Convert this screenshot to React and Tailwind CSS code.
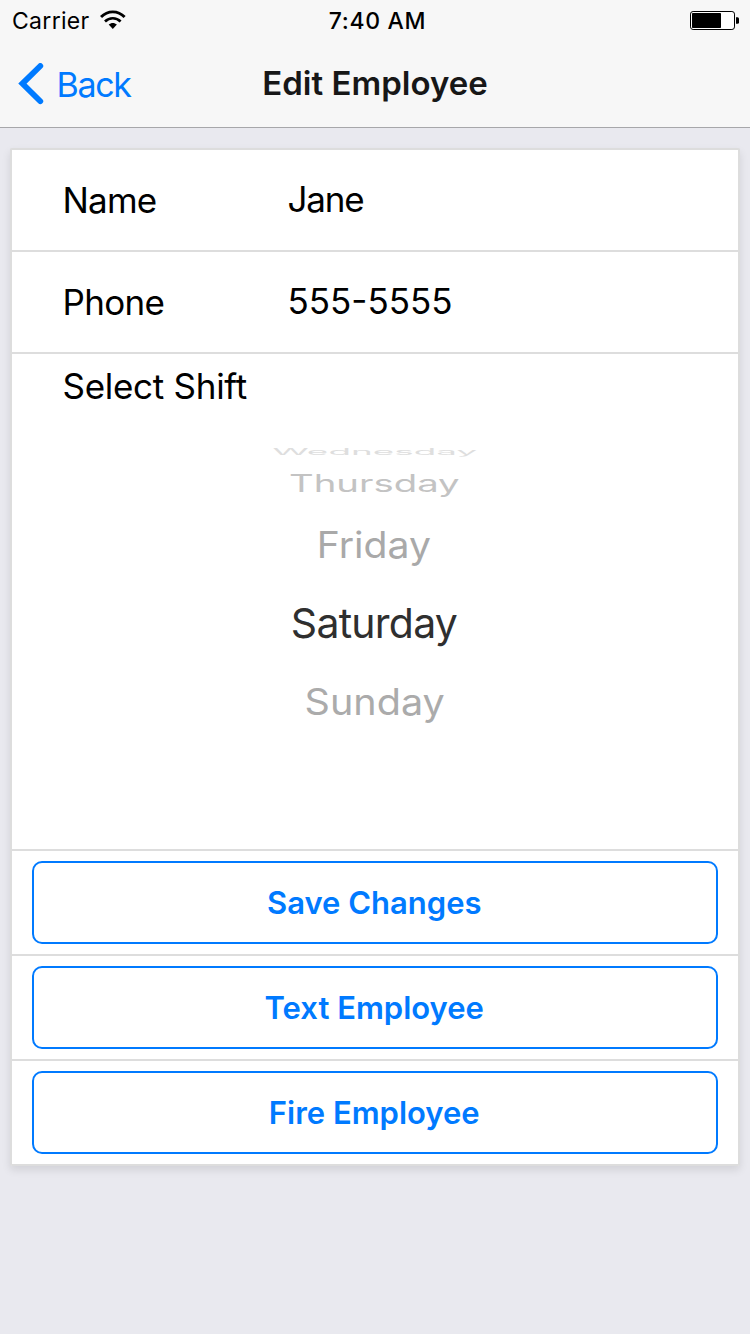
import React from "react";

const days = [
  { name: "Wednesday", row: "h-[19px]", text: "text-[#dedede] scale-x-[0.9] scale-y-[0.21]" },
  { name: "Thursday", row: "h-[45px] pr-px", text: "text-[#c3c3c3] scale-x-[0.935] scale-y-[0.58]" },
  { name: "Friday", row: "h-[78px] pr-[2px] pb-[2px]", text: "text-[#a9a9a9] scale-x-[0.955] scale-y-[0.9]" },
  { name: "Saturday", row: "h-[78px] pr-[2px]", text: "text-[#2f2f2f] tracking-[-0.75px]" },
  { name: "Sunday", row: "h-[79px] pr-px", text: "text-[#ababab] scale-x-[0.965] scale-y-[0.9]" },
];

function StatusBar() {
  return (
    <div className="flex h-10 items-center text-black">
      <div className="flex w-0 flex-1 items-center pl-3">
        <span className="whitespace-nowrap pt-px text-[23px] leading-10 tracking-[0.3px]">Carrier</span>
        <svg className="ml-[10px]" width="26" height="20" viewBox="0 0 26 20">
          <path d="M1 7C7.6.1 18 .1 24.6 7" fill="none" stroke="#000" strokeWidth="2.9" />
          <path d="M5 11.4C9.4 7.2 16.2 7.2 20.6 11.4" fill="none" stroke="#000" strokeWidth="2.7" />
          <path d="M8.7 14.6C11.2 12.3 14.4 12.3 16.9 14.6L12.8 19Z" />
        </svg>
      </div>
      <span className="whitespace-nowrap pl-[3px] pt-[2px] text-[23px] font-medium leading-10 tracking-[0.7px]">7:40 AM</span>
      <div className="flex w-0 flex-1 items-center justify-end pr-[10px]">
        <svg width="50" height="20" viewBox="0 0 50 20">
          <rect x="0.5" y="1.5" width="44" height="18" rx="2.6" fill="#fff" stroke="#000" />
          <rect x="2" y="3" width="29" height="15" rx="0.7" />
          <path d="M46 7.2h1.6q1.4 0 1.4 1.6v3.4q0 1.6-1.4 1.6H46Z" />
        </svg>
      </div>
    </div>
  );
}

function Field({ label, value, labelTracking, valueTracking }) {
  return (
    <div className="flex h-[102px] items-center border-b-2 border-[#ddd] pl-[50.5px]">
      <span className={"w-[225px] whitespace-nowrap pb-px text-[35px] leading-10 " + labelTracking}>{label}</span>
      <span className={"whitespace-nowrap pb-[3px] text-[35px] leading-10 " + valueTracking}>{value}</span>
    </div>
  );
}

function ActionRow({ label }) {
  return (
    <div className="h-[105px] border-b-2 border-[#ddd] px-5 py-[10px]">
      <button className="flex h-[83px] w-full items-center justify-center rounded-[10px] border-2 border-[#007aff] bg-white text-[31px] font-semibold text-[#007aff]">
        <span className="whitespace-nowrap pr-[1.5px] pt-[2px]">{label}</span>
      </button>
    </div>
  );
}

export default function App() {
  return (
    <div className="flex h-[1334px] w-[750px] flex-col overflow-hidden bg-[#e9e9ef] font-['Inter',sans-serif] text-black">
      <header className="h-32 border-b border-[#a7a7aa] bg-[#f7f7f7]">
        <StatusBar />
        <div className="flex h-[87px] items-center">
          <div className="flex-1">
            <div className="flex items-center pl-[18px] text-[#007aff]">
              <svg width="26" height="42" viewBox="0 0 26 42">
                <path d="M22.3 3 4.4 20.6 22.3 38.2" fill="none" stroke="currentColor" strokeWidth="5.8" strokeLinecap="round" />
              </svg>
              <span className="ml-[12.5px] whitespace-nowrap pt-[2px] text-[34px] leading-10 tracking-[-1.3px]">Back</span>
            </div>
          </div>
          <h1 className="whitespace-nowrap pb-px text-[33px] font-semibold leading-10 text-[#171717]">Edit Employee</h1>
          <div className="flex-1" />
        </div>
      </header>
      <main className="mx-[10px] mt-5 rounded-[2px] border-2 border-b-0 border-[#ddd] bg-white shadow-[0_4px_8px_rgba(0,0,0,0.1)]">
        <Field label="Name" value="Jane" labelTracking="tracking-[-0.8px]" valueTracking="tracking-[-1.2px]" />
        <Field label="Phone" value="555-5555" labelTracking="tracking-[-0.65px]" valueTracking="" />
        <section className="h-[497px] border-b-2 border-[#ddd]">
          <div className="h-[65px] whitespace-nowrap pl-[50.5px] text-[35px] leading-[65px] tracking-[-0.28px]">Select Shift</div>
          <ul className="flex flex-col items-center pt-[23px]">
            {days.map((day) => (
              <li key={day.name} className={"flex items-center " + day.row}>
                <span className={"whitespace-nowrap text-[41px] leading-none " + day.text}>{day.name}</span>
              </li>
            ))}
          </ul>
        </section>
        <ActionRow label="Save Changes" />
        <ActionRow label="Text Employee" />
        <ActionRow label="Fire Employee" />
      </main>
    </div>
  );
}
